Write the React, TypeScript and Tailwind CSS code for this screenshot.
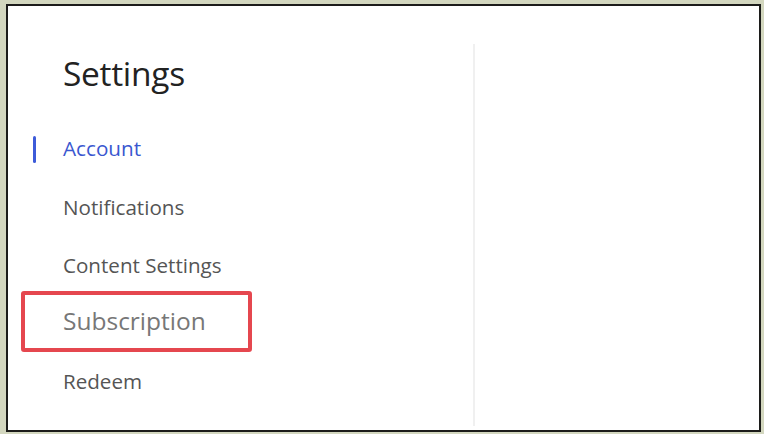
import React from "react";

export default function App() {
  const items = ["Notifications", "Content Settings"];
  return (
    <div className="w-[764px] h-[434px] bg-[#d3d7bf] pt-[4px] pl-[6px] pr-[3px] pb-[2px] overflow-hidden" style={{ fontFamily: '"Open Sans", "Noto Sans", sans-serif' }}>
      <div className="w-full h-full border-2 border-[#1c1c1a] bg-white flex">
        <div className="w-[465px] flex flex-col pt-[47px]">
          <div className="pl-[55px] text-[33.5px] leading-[40px] text-[#222] tracking-[-0.3px]">Settings</div>
          <div className="mt-[27px] flex flex-col">
            <div className="h-[58px] flex items-center relative">
              <div className="absolute left-[25px] top-[16px] w-[3px] h-[27px] bg-[#3d5bd9] rounded-sm" />
              <span className="pl-[55px] text-[20.7px] text-[#3a57d0]">Account</span>
            </div>
            {items.map((t) => (
              <div key={t} className="h-[58px] flex items-center">
                <span className="pl-[55px] text-[20.6px] text-[#555]">{t}</span>
              </div>
            ))}
            <div className="h-[58px] flex items-center">
              <div className="ml-[13px] mt-[-4px] w-[231px] h-[61px] border-[4px] border-[#e5474f] rounded-[3px] flex items-center">
                <span className="pl-[38px] text-[24.5px] text-[#777]">Subscription</span>
              </div>
            </div>
            <div className="h-[58px] flex items-center">
              <span className="pl-[55px] text-[20.6px] text-[#555]">Redeem</span>
            </div>
          </div>
        </div>
        <div className="mt-[38px] mb-[4px] w-[2px] bg-[#f0f0f0]" />
        <div className="flex-1" />
      </div>
    </div>
  );
}
